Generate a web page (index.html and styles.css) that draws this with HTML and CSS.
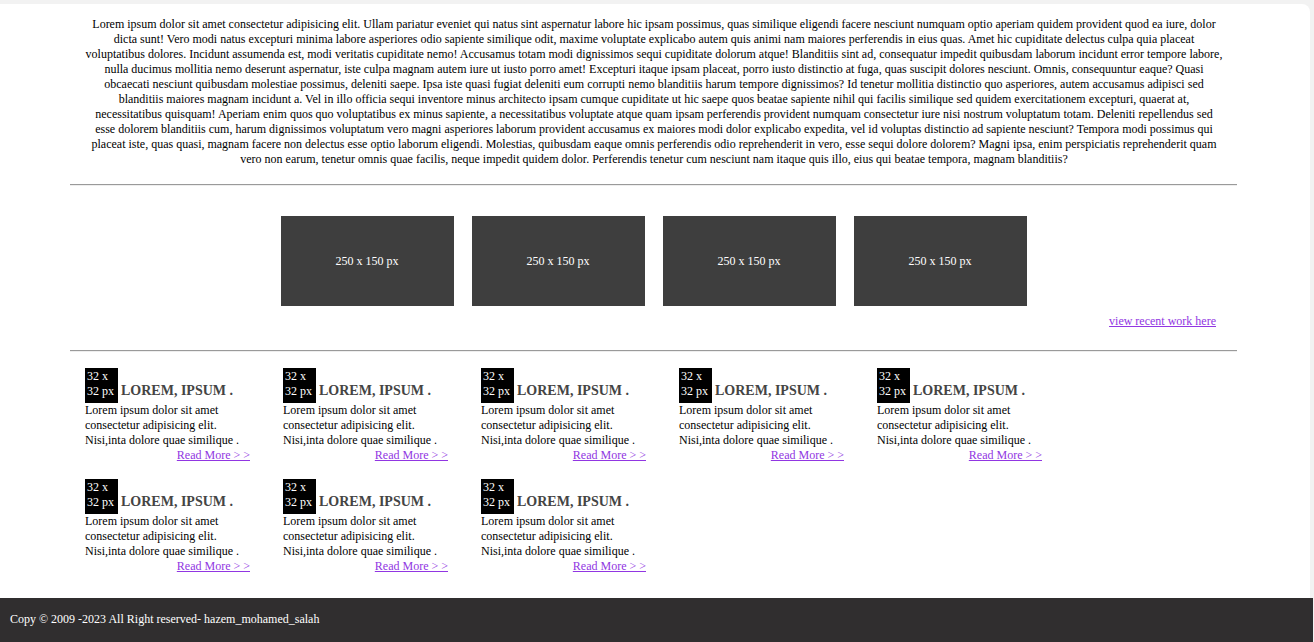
FILE: index.html
```html
<!DOCTYPE html>
<html lang="en">
<head>
<meta charset="utf-8">
<title>Portfolio</title>
<link rel="stylesheet" href="styles.css">
</head>
<body>
<div class="page">
  <div class="container">
    <p class="intro">Lorem ipsum dolor sit amet consectetur adipisicing elit. Ullam pariatur eveniet qui natus sint aspernatur labore hic ipsam possimus, quas similique eligendi facere nesciunt numquam optio aperiam quidem provident quod ea iure, dolor dicta sunt! Vero modi natus excepturi minima labore asperiores odio sapiente similique odit, maxime voluptate explicabo autem quis animi nam maiores perferendis in eius quas. Amet hic cupiditate delectus culpa quia placeat voluptatibus dolores. Incidunt assumenda est, modi veritatis cupiditate nemo! Accusamus totam modi dignissimos sequi cupiditate dolorum atque! Blanditiis sint ad, consequatur impedit quibusdam laborum incidunt error tempore labore, nulla ducimus mollitia nemo deserunt aspernatur, iste culpa magnam autem iure ut iusto porro amet! Excepturi itaque ipsam placeat, porro iusto distinctio at fuga, quas suscipit dolores nesciunt. Omnis, consequuntur eaque? Quasi obcaecati nesciunt quibusdam molestiae possimus, deleniti saepe. Ipsa iste quasi fugiat deleniti eum corrupti nemo blanditiis harum tempore dignissimos? Id tenetur mollitia distinctio quo asperiores, autem accusamus adipisci sed blanditiis maiores magnam incidunt a. Vel in illo officia sequi inventore minus architecto ipsam cumque cupiditate ut hic saepe quos beatae sapiente nihil qui facilis similique sed quidem exercitationem excepturi, quaerat at, necessitatibus quisquam! Aperiam enim quos quo voluptatibus ex minus sapiente, a necessitatibus voluptate atque quam ipsam perferendis provident numquam consectetur iure nisi nostrum voluptatum totam. Deleniti repellendus sed esse dolorem blanditiis cum, harum dignissimos voluptatum vero magni asperiores laborum provident accusamus ex maiores modi dolor explicabo expedita, vel id voluptas distinctio ad sapiente nesciunt? Tempora modi possimus qui placeat iste, quas quasi, magnam facere non delectus esse optio laborum eligendi. Molestias, quibusdam eaque omnis perferendis odio reprehenderit in vero, esse sequi dolore dolorem? Magni ipsa, enim perspiciatis reprehenderit quam vero non earum, tenetur omnis quae facilis, neque impedit quidem dolor. Perferendis tenetur cum nesciunt nam itaque quis illo, eius qui beatae tempora, magnam blanditiis?</p>
    <hr class="rule rule-top">
    <div class="works">
      <div class="thumb">250 x 150 px</div>
      <div class="thumb">250 x 150 px</div>
      <div class="thumb">250 x 150 px</div>
      <div class="thumb">250 x 150 px</div>
    </div>
    <div class="recent"><a href="#" class="link">view recent work here</a></div>
    <hr class="rule rule-mid">
    <div class="features">
      <div class="feature">
        <div class="feature-head"><span class="icon">32 x<br>32 px</span> <span class="title">LOREM, IPSUM .</span></div>
        <p class="feature-text">Lorem ipsum dolor sit amet consectetur adipisicing elit. Nisi,inta dolore quae similique .</p>
        <div class="more"><a href="#" class="link">Read More &gt; &gt;</a></div>
      </div>
      <div class="feature">
        <div class="feature-head"><span class="icon">32 x<br>32 px</span> <span class="title">LOREM, IPSUM .</span></div>
        <p class="feature-text">Lorem ipsum dolor sit amet consectetur adipisicing elit. Nisi,inta dolore quae similique .</p>
        <div class="more"><a href="#" class="link">Read More &gt; &gt;</a></div>
      </div>
      <div class="feature">
        <div class="feature-head"><span class="icon">32 x<br>32 px</span> <span class="title">LOREM, IPSUM .</span></div>
        <p class="feature-text">Lorem ipsum dolor sit amet consectetur adipisicing elit. Nisi,inta dolore quae similique .</p>
        <div class="more"><a href="#" class="link">Read More &gt; &gt;</a></div>
      </div>
      <div class="feature">
        <div class="feature-head"><span class="icon">32 x<br>32 px</span> <span class="title">LOREM, IPSUM .</span></div>
        <p class="feature-text">Lorem ipsum dolor sit amet consectetur adipisicing elit. Nisi,inta dolore quae similique .</p>
        <div class="more"><a href="#" class="link">Read More &gt; &gt;</a></div>
      </div>
      <div class="feature">
        <div class="feature-head"><span class="icon">32 x<br>32 px</span> <span class="title">LOREM, IPSUM .</span></div>
        <p class="feature-text">Lorem ipsum dolor sit amet consectetur adipisicing elit. Nisi,inta dolore quae similique .</p>
        <div class="more"><a href="#" class="link">Read More &gt; &gt;</a></div>
      </div>
      <div class="feature">
        <div class="feature-head"><span class="icon">32 x<br>32 px</span> <span class="title">LOREM, IPSUM .</span></div>
        <p class="feature-text">Lorem ipsum dolor sit amet consectetur adipisicing elit. Nisi,inta dolore quae similique .</p>
        <div class="more"><a href="#" class="link">Read More &gt; &gt;</a></div>
      </div>
      <div class="feature">
        <div class="feature-head"><span class="icon">32 x<br>32 px</span> <span class="title">LOREM, IPSUM .</span></div>
        <p class="feature-text">Lorem ipsum dolor sit amet consectetur adipisicing elit. Nisi,inta dolore quae similique .</p>
        <div class="more"><a href="#" class="link">Read More &gt; &gt;</a></div>
      </div>
      <div class="feature">
        <div class="feature-head"><span class="icon">32 x<br>32 px</span> <span class="title">LOREM, IPSUM .</span></div>
        <p class="feature-text">Lorem ipsum dolor sit amet consectetur adipisicing elit. Nisi,inta dolore quae similique .</p>
        <div class="more"><a href="#" class="link">Read More &gt; &gt;</a></div>
      </div>
    </div>
  </div>
</div>
<footer class="footer">Copy &copy; 2009 -2023 All Right reserved- hazem_mohamed_salah</footer>
</body>
</html>
```
FILE: styles.css
```css
* {
  box-sizing: border-box;
}

html, body {
  margin: 0;
  padding: 0;
}

body {
  background: #f2f2f2;
  padding-top: 4px;
  font-family: "Liberation Serif", "Times New Roman", serif;
  font-size: 12px;
  line-height: 15px;
  color: #000;
}

.page {
  background: #fff;
  margin-right: 4px;
  border-top-right-radius: 8px;
  padding: 13px 0 24px;
}

.container {
  width: 1167px;
  margin-left: 70px;
}

.intro {
  margin: 0;
  padding: 0 13px 0 14px;
  text-align: center;
}

.rule {
  display: block;
  height: 2px;
  margin: 0;
  border: 0;
  border-top: 1px solid #9a9a9a;
  border-bottom: 1px solid #eeeeee;
}

.rule-top {
  margin-top: 17px;
}

.rule-mid {
  margin-top: 21px;
}

.works {
  display: flex;
  justify-content: center;
  gap: 18px;
  margin-top: 30px;
}

.thumb {
  width: 173px;
  height: 90px;
  background: #3e3e3e;
  color: #fff;
  display: flex;
  align-items: center;
  justify-content: center;
}

.recent {
  margin-top: 8px;
  text-align: right;
  padding-right: 21px;
}

.link {
  color: #9136e2;
  text-decoration: underline;
}

.features {
  display: grid;
  grid-template-columns: repeat(5, 165px);
  column-gap: 33px;
  row-gap: 16px;
  padding-left: 15px;
  margin-top: 16px;
}

.feature-head {
  line-height: 15px;
}

.icon {
  display: inline-block;
  width: 33px;
  background: #000;
  color: #fff;
  padding: 1px 1px 4px 2px;
  line-height: 15px;
}

.title {
  font-size: 14px;
  font-weight: bold;
  color: #444;
}

.feature-text {
  margin: 0;
}

.more {
  text-align: right;
}

.footer {
  background: #302e2f;
  color: #fff;
  height: 44px;
  padding: 14px 10px;
  margin-right: 1px;
}
```
